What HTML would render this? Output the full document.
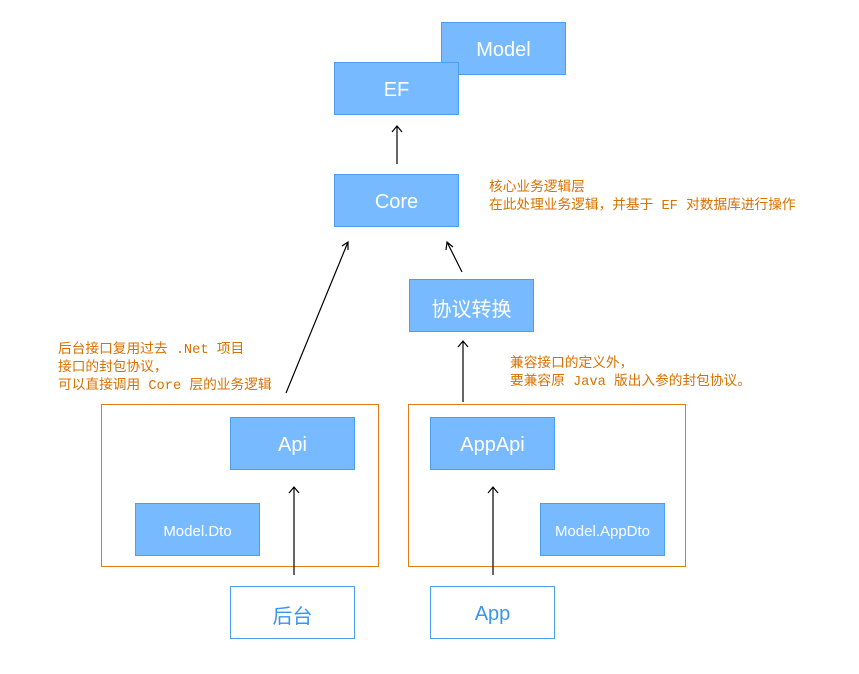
<!DOCTYPE html>
<html><head><meta charset="utf-8"><style>
body{margin:0;width:859px;height:674px;background:#fff;position:relative;overflow:hidden;font-family:"Liberation Sans","Noto Sans CJK SC",sans-serif}
.b{position:absolute;width:123px;height:51px;box-sizing:content-box;background:#78baff;border:1px solid #4a9ff0;color:#fff;font-size:20px;display:flex;align-items:center;justify-content:center;padding-top:0}
.b span{position:relative;top:2px}
.s{font-size:15px}
.w{background:#fff;border-color:#4a9ff0;color:#3a95f0}
.f{position:absolute;border:1px solid #e07c10}
.t{position:absolute;color:#d97000;font-size:13.7px;line-height:18px;font-family:"Liberation Mono","Noto Sans CJK SC",monospace;white-space:nowrap}
svg{position:absolute;left:0;top:0}
</style></head><body>
<div class="f" style="left:101px;top:404px;width:276px;height:161px"></div>
<div class="f" style="left:408px;top:404px;width:276px;height:161px"></div>
<div class="b" style="left:441px;top:22px"><span>Model</span></div>
<div class="b" style="left:334px;top:62px"><span>EF</span></div>
<div class="b" style="left:334px;top:174px"><span>Core</span></div>
<div class="b" style="left:409px;top:279px"><span>协议转换</span></div>
<div class="b" style="left:230px;top:417px"><span>Api</span></div>
<div class="b" style="left:430px;top:417px"><span>AppApi</span></div>
<div class="b s" style="left:135px;top:503px"><span>Model.Dto</span></div>
<div class="b s" style="left:540px;top:503px"><span>Model.AppDto</span></div>
<div class="b w" style="left:230px;top:586px"><span>后台</span></div>
<div class="b w" style="left:430px;top:586px"><span>App</span></div>
<div class="t" style="left:489px;top:180px">核心业务逻辑层<br>在此处理业务逻辑，并基于 EF 对数据库进行操作</div>
<div class="t" style="left:58px;top:342px">后台接口复用过去 .Net 项目<br>接口的封包协议，<br>可以直接调用 Core 层的业务逻辑</div>
<div class="t" style="left:510px;top:356px">兼容接口的定义外，<br>要兼容原 Java 版出入参的封包协议。</div>
<svg width="859" height="674" fill="none" stroke="#000" stroke-width="1.2">
<path d="M397 164V126M392 132L397 126L402 132"/>
<path d="M286 393L348 242M342 246L348 242L348 250"/>
<path d="M462 272L447 242M446 250L447 242L453 247"/>
<path d="M463 402V341M458 347L463 341L468 347"/>
<path d="M294 575V487M289 493L294 487L299 493"/>
<path d="M493 575V487M488 493L493 487L498 493"/>
</svg>
</body></html>
